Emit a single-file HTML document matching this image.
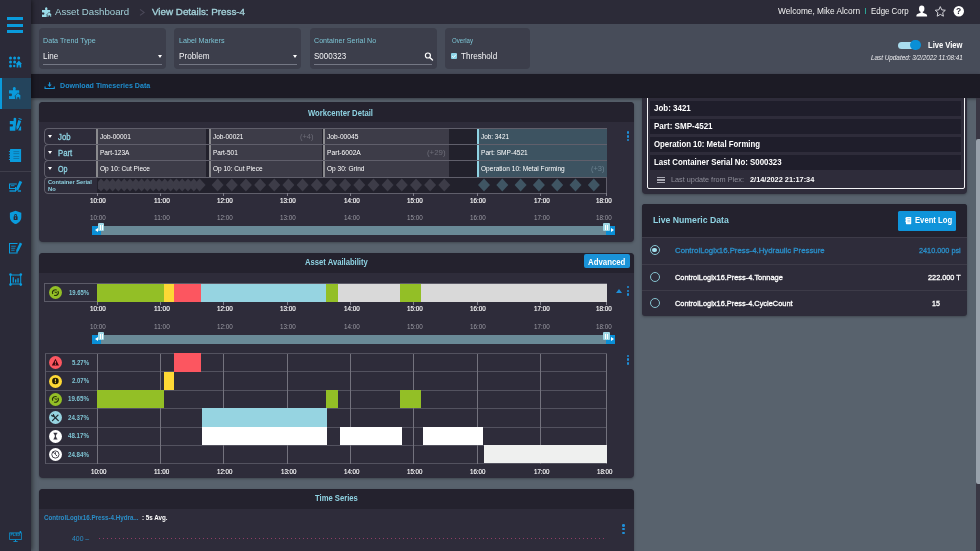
<!DOCTYPE html>
<html><head><meta charset="utf-8"><title>Asset Dashboard</title>
<style>
*{box-sizing:border-box;margin:0;padding:0}
html,body{width:980px;height:551px;overflow:hidden;background:#58626d;font-family:"Liberation Sans",sans-serif;color:#fff}
#root{position:relative;width:980px;height:551px;overflow:hidden;will-change:transform}
#root div,#root span,#root svg{position:absolute}
.t{white-space:nowrap;line-height:1}
.panel{background:#2e2c3a;border-radius:4px;box-shadow:0 1px 2.5px rgba(0,0,0,.28)}
.phead{background:#24222e;border-radius:4px 4px 0 0;left:0;top:0;width:100%;height:20px}
.card{background:#3c3e4b;border-radius:4px;top:27.5px;height:41px}
</style></head><body><div id="root">

<div style="left:0;top:0;width:980px;height:24px;background:#2c2b38"></div>
<div style="left:31px;top:24px;width:949px;height:49.5px;background:#474c59"></div>
<div style="left:31px;top:73.5px;width:949px;height:24.5px;background:#1c1b25;box-shadow:0 1px 3px rgba(0,0,0,.4)"></div>
<div style="left:0;top:0;width:31px;height:551px;background:#2b2a38;box-shadow:1px 0 5px rgba(0,0,0,.55)"></div>
<div style="left:0;top:77.5px;width:30.5px;height:31px;background:#24445c"></div>
<div style="left:0;top:77.5px;width:2px;height:31px;background:#0a9bdc"></div>
<div style="left:0;top:170.5px;width:31px;height:1px;background:#3f3e4b"></div>
<div style="left:6.8px;top:17.3px;width:16.4px;height:3px;background:#0a9bdc"></div>
<div style="left:6.8px;top:23.9px;width:16.4px;height:3px;background:#0a9bdc"></div>
<div style="left:6.8px;top:30.3px;width:16.4px;height:3px;background:#0a9bdc"></div>
<svg style="left:0;top:0" width="31" height="551" viewBox="0 0 31 551" fill="#0a9bdc">
<!-- grid + home -->
<g><circle cx="10.5" cy="58" r="1.5"/><circle cx="14.6" cy="58" r="1.5"/><circle cx="18.7" cy="58" r="1.5"/>
<circle cx="10.5" cy="62" r="1.5"/><circle cx="14.6" cy="62" r="1.5"/><circle cx="10.5" cy="66" r="1.5"/><circle cx="14.2" cy="66" r="1.2"/>
<path d="M18.9 60.6 L22 63.9 L21.2 63.9 L21.2 67.4 L19.6 67.4 L19.6 65.3 L18.3 65.3 L18.3 67.4 L16.6 67.4 L16.6 63.9 L15.8 63.9 Z"/></g>
<!-- puzzle + home (active) -->
<g><path d="M9 90.3 H13 V89.3 A1.5 1.5 0 1 1 15.6 89.3 V90.3 H19.2 V93.2 L15 97 V99 H9 V96 H10.2 A1.3 1.3 0 1 0 10.2 93.6 H9 Z"/>
<path stroke="#24445c" stroke-width="0.6" d="M18 92.8 L21.4 96.2 L20.6 96.2 L20.6 99.2 L19 99.2 L19 97.4 L17.4 97.4 L17.4 99.2 L15.6 99.2 L15.6 96.2 L14.8 96.2 Z"/></g>
<!-- puzzle + pencil -->
<g><path d="M9.8 121 H13.6 V118.7 Q13.6 117.8 14.9 117.8 Q16.2 117.8 16.2 118.7 V121 L15.3 130.8 H9.8 V126.6 H12.2 Q13 126.6 13 125.45 Q13 124.3 12.2 124.3 H9.8 Z"/>
<path d="M18.4 119.9 L21.2 120.9 L18.9 127.6 L16.7 130.2 L16.3 126.8 Z"/><path d="M18.7 118 L21.8 119.1 L21.5 120.1 L18.5 119 Z"/><path d="M20.2 126.4 H21.1 V130.5 H18.2 Z"/></g>
<!-- notebook -->
<g><rect x="10" y="149" width="11.1" height="13" rx="0.6"/>
<rect x="8.9" y="151.1" width="2.4" height="1"/><rect x="8.9" y="153.8" width="2.4" height="1"/><rect x="8.9" y="156.5" width="2.4" height="1"/><rect x="8.9" y="159" width="2.4" height="1"/>
<g fill="#0f74a6"><rect x="13.4" y="151.2" width="5.8" height="0.9"/><rect x="13.4" y="153.2" width="5.8" height="0.9"/><rect x="13.4" y="156" width="5.8" height="0.9"/><rect x="13.4" y="158" width="5.8" height="0.9"/></g></g>
<!-- monitor + pencil -->
<g><path d="M9 183.4 H16.8 V184.5 H10.1 V188 H15.5 V189.1 H9 Z"/><rect x="10.9" y="185.3" width="3.6" height="0.9"/>
<path d="M19.6 180.8 L22.2 182 L18.6 189.4 L16.4 191 L16.2 188.2 Z"/><rect x="9.4" y="190.3" width="6.6" height="1.4"/><rect x="15" y="187" width="1.2" height="4"/><rect x="17.8" y="190.3" width="3.2" height="1.4"/></g>
<!-- shield + lock -->
<g><path d="M15.6 210.8 L21.3 212.7 V217 C21.3 220.6 18.8 223 15.6 224.1 C12.4 223 9.9 220.6 9.9 217 V212.7 Z"/>
<g fill="#2b2a38"><rect x="13.6" y="216.3" width="4" height="3.6" rx="0.4"/><path d="M14.3 216.5 V215.3 A1.3 1.3 0 0 1 16.9 215.3 V216.5 H16.1 V215.3 A0.5 0.5 0 0 0 15.1 215.3 V216.5 Z"/></g><rect x="15.2" y="217.3" width="0.8" height="1.6" fill="#0a9bdc"/></g>
<!-- doc + pencil (outline) -->
<g><path d="M9 243 H17.5 V244 H10 V252.6 H16.6 V249.5 H17.6 V253.6 H9 Z"/>
<rect x="11.2" y="245.8" width="4.6" height="0.8"/><rect x="11.2" y="247.8" width="4" height="0.8"/><rect x="11.2" y="249.8" width="3.4" height="0.8"/>
<path d="M19.8 242.6 L22.2 243.7 L18.6 251 L16.6 252.5 L16.4 250 Z"/></g>
<!-- chart frame -->
<g><path d="M10 274.6 H21.2 V284.6 H10 Z M11 275.6 V283.6 H20.2 V275.6 Z" fill-rule="evenodd"/>
<circle cx="10.5" cy="274.6" r="1.3"/><circle cx="20.8" cy="274.6" r="1.3"/><circle cx="10.5" cy="284.6" r="1.3"/><circle cx="20.8" cy="284.6" r="1.3"/>
<rect x="12.6" y="277.2" width="1.3" height="5.4"/><rect x="15" y="279.4" width="1.3" height="3.2"/><rect x="17.4" y="278.2" width="1.3" height="4.4"/></g>
<!-- plex monitor -->
<g><path d="M9.2 532.6 H21.8 V539.8 H9.2 Z M9.9 533.3 V539.1 H21.1 V533.3 Z" fill-rule="evenodd"/><circle cx="20.4" cy="532" r="0.9"/>
<rect x="15" y="539.8" width="1" height="1.4"/><rect x="13.4" y="541.1" width="4.2" height="0.8"/></g>
</svg>
<div class="t" style="left:10.4px;top:534.3px;font-size:3.6px;color:#0a9bdc;font-weight:bold;letter-spacing:0.2px">PLEX</div>

<div class="t" style="left:54.8px;top:7.3px;font-size:9.5px;color:#a3d1d9;transform-origin:0 0;transform:scaleX(1.018);">Asset Dashboard</div>
<svg style="left:138px;top:7px" width="8" height="11" viewBox="138 7 8 11"><polyline points="140,9.4 144.1,12.4 140,15.4" fill="none" stroke="#4b4959" stroke-width="1.1"/></svg>
<div class="t" style="left:151.9px;top:7.3px;font-size:9.5px;color:#a3d1d9;transform-origin:0 0;transform:scaleX(1.033);-webkit-text-stroke:0.35px #a3d1d9;">View Details: Press-4</div>
<div class="t" style="left:778.0px;top:7.4px;font-size:9px;color:#f2f2f2;transform-origin:0 0;transform:scaleX(0.923);">Welcome, Mike Alcorn</div>
<div style="left:864.6px;top:7.6px;width:1.3px;height:6.6px;background:#2aa595"></div>
<div class="t" style="left:870.6px;top:7.4px;font-size:9px;color:#f2f2f2;transform-origin:0 0;transform:scaleX(0.876);">Edge Corp</div>
<svg style="left:0;top:0" width="980" height="24" viewBox="0 0 980 24">
<ellipse cx="921.7" cy="8.8" rx="2.7" ry="3.2" fill="#fff"/>
<path d="M916.4 16.4 V15.4 Q916.4 14.4 918 13.8 L920.6 12.8 V11.2 H922.8 V12.8 L925.4 13.8 Q927.1 14.4 927.1 15.4 V16.4 Z" fill="#fff"/>
<polygon points="940.30,6.60 941.77,9.88 945.34,10.26 942.68,12.67 943.42,16.19 940.30,14.40 937.18,16.19 937.92,12.67 935.26,10.26 938.83,9.88" fill="none" stroke="#d4d4da" stroke-width="1"/>
<circle cx="958.8" cy="11.3" r="5.2" fill="#fff"/>
</svg>
<div class="t" style="left:956.1px;top:7px;font-size:8.5px;font-weight:bold;color:#2b2a37">?</div>
<svg id="hdrpuzzle" style="left:0;top:0" width="60" height="24" viewBox="0 0 60 24" fill="#9adbe8"><g transform="translate(34.80 -62.28) scale(0.8)">
<path d="M9 90.3 H13 V89.3 A1.5 1.5 0 1 1 15.6 89.3 V90.3 H19.2 V93.2 L15 97 V99 H9 V96 H10.2 A1.3 1.3 0 1 0 10.2 93.6 H9 Z"/>
<path stroke="#2b2a37" stroke-width="0.6" d="M18 92.8 L21.4 96.2 L20.6 96.2 L20.6 99.2 L19 99.2 L19 97.4 L17.4 97.4 L17.4 99.2 L15.6 99.2 L15.6 96.2 L14.8 96.2 Z"/></g></svg>

<div class="card" style="left:39px;width:127px"></div>
<div class="t" style="left:43.3px;top:37.1px;font-size:7.5px;color:#7cc3d3;transform-origin:0 0;transform:scaleX(0.953);">Data Trend Type</div>
<div class="t" style="left:43.3px;top:52.2px;font-size:8.5px;color:#f4f4f6;transform-origin:0 0;transform:scaleX(0.946);">Line</div>
<div style="left:43.3px;top:64px;width:118.5px;height:1px;background:#747784"></div>
<div style="left:158px;top:55.1px;width:0;height:0;border-left:2.5px solid transparent;border-right:2.5px solid transparent;border-top:3.2px solid #fff"></div>
<div class="card" style="left:174.2px;width:127px"></div>
<div class="t" style="left:178.5px;top:37.1px;font-size:7.5px;color:#7cc3d3;transform-origin:0 0;transform:scaleX(0.957);">Label Markers</div>
<div class="t" style="left:178.5px;top:52.2px;font-size:8.5px;color:#f4f4f6;transform-origin:0 0;transform:scaleX(0.964);">Problem</div>
<div style="left:178.5px;top:64px;width:118.5px;height:1px;background:#747784"></div>
<div style="left:293.2px;top:55.1px;width:0;height:0;border-left:2.5px solid transparent;border-right:2.5px solid transparent;border-top:3.2px solid #fff"></div>
<div class="card" style="left:309.6px;width:127px"></div>
<div class="t" style="left:313.9px;top:37.1px;font-size:7.5px;color:#7cc3d3;transform-origin:0 0;transform:scaleX(0.949);">Container Serial No</div>
<div class="t" style="left:313.9px;top:52.2px;font-size:8.5px;color:#f4f4f6;transform-origin:0 0;transform:scaleX(0.943);">S000323</div>
<div style="left:313.90000000000003px;top:64px;width:118.5px;height:1px;background:#747784"></div>
<div class="card" style="left:445px;width:84.5px"></div>
<div class="t" style="left:451.5px;top:37.1px;font-size:7.5px;color:#7cc3d3;transform-origin:0 0;transform:scaleX(0.813);">Overlay</div>
<svg style="left:422px;top:50px" width="14" height="14" viewBox="422 50 14 14"><circle cx="427.9" cy="55.5" r="2.5" fill="none" stroke="#fff" stroke-width="1.2"/><line x1="429.8" y1="57.5" x2="432.5" y2="60" stroke="#fff" stroke-width="1.4" stroke-linecap="round"/></svg>
<div style="left:451.1px;top:53px;width:6px;height:6.4px;background:#8dd3e6;border-radius:1px"></div>
<svg style="left:451.1px;top:53.2px" width="6" height="6" viewBox="0 0 10 10"><path d="M2 5.2 L4.2 7.4 L8.2 2.8" fill="none" stroke="#fff" stroke-width="1.6"/></svg>
<div class="t" style="left:461.0px;top:52.2px;font-size:8.5px;color:#f4f4f6;transform-origin:0 0;transform:scaleX(0.958);">Threshold</div>
<div style="left:898px;top:41.6px;width:21px;height:7.2px;border-radius:3.6px;background:#a9dcee"></div>
<div style="left:910px;top:39.7px;width:10.6px;height:10.6px;border-radius:50%;background:#0a8fd6"></div>
<div class="t" style="left:928.0px;top:40.8px;font-size:8.5px;color:#fff;transform-origin:0 0;transform:scaleX(0.894);font-weight:bold;">Live View</div>
<div class="t" style="left:870.6px;top:54.6px;font-size:6.3px;color:#f0f0f2;transform-origin:0 0;transform:scaleX(1.006);font-style:italic;">Last Updated: 3/2/2022 11:08:41</div>
<div class="t" style="left:59.8px;top:81.9px;font-size:7px;color:#1f8fd0;transform-origin:0 0;transform:scaleX(1.014);font-weight:bold;">Download Timeseries Data</div>
<svg style="left:42px;top:80px" width="16" height="12" viewBox="42 80 16 12" fill="#1797dc"><path d="M44.5 86.6 H45.6 V87.9 H53.7 V86.6 H54.8 V89 H44.5 Z"/><path d="M49 82.3 H50.2 V84.6 H51.6 L49.6 87 L47.6 84.6 H49 Z"/></svg>
<div class="panel" style="left:39px;top:102px;width:595px;height:140px"><div class="phead"></div></div>
<div class="t" style="left:308.0px;top:108.8px;font-size:8.5px;color:#8fd3e3;transform-origin:0 0;transform:scaleX(0.901);font-weight:bold;">Workcenter Detail</div>
<div style="left:44.2px;top:128px;width:53px;height:17.2px;border:1px solid #605f6b;border-right:none;border-radius:4.5px 0 0 4.5px"></div>
<div style="left:48.2px;top:134.6px;width:0;height:0;border-left:2.3px solid transparent;border-right:2.3px solid transparent;border-top:3.4px solid #fff"></div>
<div class="t" style="left:58.4px;top:132.6px;font-size:8.8px;color:#8fd3e3;transform-origin:0 0;transform:scaleX(0.881);-webkit-text-stroke:0.3px #8fd3e3;">Job</div>
<div style="left:97px;top:128px;width:510px;height:17.2px;background:#22212c;border-top:1px solid #605f6b;border-bottom:1px solid #605f6b;border-right:1px solid #605f6b"></div>
<div style="left:44.2px;top:144.2px;width:53px;height:17.2px;border:1px solid #605f6b;border-right:none;border-radius:4.5px 0 0 4.5px"></div>
<div style="left:48.2px;top:150.79999999999998px;width:0;height:0;border-left:2.3px solid transparent;border-right:2.3px solid transparent;border-top:3.4px solid #fff"></div>
<div class="t" style="left:58.4px;top:148.8px;font-size:8.8px;color:#8fd3e3;transform-origin:0 0;transform:scaleX(0.880);-webkit-text-stroke:0.3px #8fd3e3;">Part</div>
<div style="left:97px;top:144.2px;width:510px;height:17.2px;background:#22212c;border-top:1px solid #605f6b;border-bottom:1px solid #605f6b;border-right:1px solid #605f6b"></div>
<div style="left:44.2px;top:160.4px;width:53px;height:17.2px;border:1px solid #605f6b;border-right:none;border-radius:4.5px 0 0 4.5px"></div>
<div style="left:48.2px;top:167.0px;width:0;height:0;border-left:2.3px solid transparent;border-right:2.3px solid transparent;border-top:3.4px solid #fff"></div>
<div class="t" style="left:58.4px;top:165.0px;font-size:8.8px;color:#8fd3e3;transform-origin:0 0;transform:scaleX(0.809);-webkit-text-stroke:0.3px #8fd3e3;">Op</div>
<div style="left:97px;top:160.4px;width:510px;height:17.2px;background:#22212c;border-top:1px solid #605f6b;border-bottom:1px solid #605f6b;border-right:1px solid #605f6b"></div>
<div style="left:44.2px;top:176.6px;width:53px;height:17px;border:1px solid #605f6b;border-right:none;border-radius:4.5px 0 0 4.5px"></div>
<div class="t" style="left:48.1px;top:179.4px;font-size:6px;color:#8fd3e3;transform-origin:0 0;transform:scaleX(0.950);font-weight:bold;">Container Serial</div>
<div class="t" style="left:48.1px;top:186.0px;font-size:6px;color:#8fd3e3;transform-origin:0 0;transform:scaleX(0.963);font-weight:bold;">No</div>
<div style="left:97px;top:176.6px;width:510px;height:17px;background:#22212c;border-top:1px solid #605f6b;border-bottom:1px solid #605f6b;border-right:1px solid #605f6b"></div>
<div style="left:96.4px;top:129px;width:110.1px;height:15.2px;background:#3d3c48;border-left:2px solid #8a8a8e"></div>
<div class="t" style="left:99.8px;top:133.9px;font-size:6.8px;color:#fff;transform-origin:0 0;transform:scaleX(0.958);">Job-00001</div>
<div style="left:96.4px;top:145.2px;width:110.1px;height:15.2px;background:#3d3c48;border-left:2px solid #8a8a8e"></div>
<div class="t" style="left:99.8px;top:150.1px;font-size:6.8px;color:#fff;transform-origin:0 0;transform:scaleX(0.963);">Part-123A</div>
<div style="left:96.4px;top:161.4px;width:110.1px;height:15.2px;background:#3d3c48;border-left:2px solid #8a8a8e"></div>
<div class="t" style="left:99.8px;top:166.3px;font-size:6.8px;color:#fff;transform-origin:0 0;transform:scaleX(0.966);">Op 10: Cut Piece</div>
<div style="left:209.2px;top:129px;width:113.30000000000001px;height:15.2px;background:#3d3c48;border-left:2px solid #8a8a8e"></div>
<div class="t" style="left:212.6px;top:133.9px;font-size:6.8px;color:#fff;transform-origin:0 0;transform:scaleX(0.946);">Job-00021</div>
<div class="t" style="left:300.3px;top:133.9px;font-size:6.8px;color:#6d6d78;transform-origin:0 0;transform:scaleX(1.099);">(+4)</div>
<div style="left:209.2px;top:145.2px;width:113.30000000000001px;height:15.2px;background:#3d3c48;border-left:2px solid #8a8a8e"></div>
<div class="t" style="left:212.6px;top:150.1px;font-size:6.8px;color:#fff;transform-origin:0 0;transform:scaleX(0.951);">Part-501</div>
<div style="left:209.2px;top:161.4px;width:113.30000000000001px;height:15.2px;background:#3d3c48;border-left:2px solid #8a8a8e"></div>
<div class="t" style="left:212.6px;top:166.3px;font-size:6.8px;color:#fff;transform-origin:0 0;transform:scaleX(0.958);">Op 10: Cut Piece</div>
<div style="left:323.2px;top:129px;width:126.30000000000001px;height:15.2px;background:#3d3c48;border-left:2px solid #8a8a8e"></div>
<div class="t" style="left:326.6px;top:133.9px;font-size:6.8px;color:#fff;transform-origin:0 0;transform:scaleX(0.977);">Job-00045</div>
<div style="left:323.2px;top:145.2px;width:126.30000000000001px;height:15.2px;background:#3d3c48;border-left:2px solid #8a8a8e"></div>
<div class="t" style="left:326.6px;top:150.1px;font-size:6.8px;color:#fff;transform-origin:0 0;transform:scaleX(0.983);">Part-6002A</div>
<div class="t" style="left:426.7px;top:150.1px;font-size:6.8px;color:#6d6d78;transform-origin:0 0;transform:scaleX(1.158);">(+29)</div>
<div style="left:323.2px;top:161.4px;width:126.30000000000001px;height:15.2px;background:#3d3c48;border-left:2px solid #8a8a8e"></div>
<div class="t" style="left:326.6px;top:166.3px;font-size:6.8px;color:#fff;transform-origin:0 0;transform:scaleX(0.963);">Op 30: Grind</div>
<div style="left:476.6px;top:129px;width:130px;height:15.2px;background:#3d5361;border-left:2px solid #8fd3e3"></div>
<div class="t" style="left:480.6px;top:133.9px;font-size:6.8px;color:#fff;transform-origin:0 0;transform:scaleX(0.937);">Job: 3421</div>
<div style="left:476.6px;top:145.2px;width:130px;height:15.2px;background:#3d5361;border-left:2px solid #8fd3e3"></div>
<div class="t" style="left:480.6px;top:150.1px;font-size:6.8px;color:#fff;transform-origin:0 0;transform:scaleX(0.967);">Part: SMP-4521</div>
<div style="left:476.6px;top:161.4px;width:130px;height:15.2px;background:#3d5361;border-left:2px solid #8fd3e3"></div>
<div class="t" style="left:480.6px;top:166.3px;font-size:6.8px;color:#fff;transform-origin:0 0;transform:scaleX(0.968);">Operation 10: Metal Forming</div>
<div class="t" style="left:591.0px;top:166.3px;font-size:6.8px;color:#6b8290;transform-origin:0 0;transform:scaleX(1.099);">(+3)</div>
<svg style="left:98px;top:170px" width="520" height="30" viewBox="98 170 520 30"><polygon points="95.0,185 101.0,178.5 107.0,185 101.0,191.5" fill="#3d3c48"/><polygon points="100.8,185 106.8,178.5 112.8,185 106.8,191.5" fill="#3d3c48"/><polygon points="106.6,185 112.6,178.5 118.6,185 112.6,191.5" fill="#3d3c48"/><polygon points="112.4,185 118.4,178.5 124.4,185 118.4,191.5" fill="#3d3c48"/><polygon points="118.2,185 124.2,178.5 130.2,185 124.2,191.5" fill="#3d3c48"/><polygon points="124.0,185 130.0,178.5 136.0,185 130.0,191.5" fill="#3d3c48"/><polygon points="129.8,185 135.8,178.5 141.8,185 135.8,191.5" fill="#3d3c48"/><polygon points="135.6,185 141.6,178.5 147.6,185 141.6,191.5" fill="#3d3c48"/><polygon points="141.4,185 147.4,178.5 153.4,185 147.4,191.5" fill="#3d3c48"/><polygon points="147.2,185 153.2,178.5 159.2,185 153.2,191.5" fill="#3d3c48"/><polygon points="153.0,185 159.0,178.5 165.0,185 159.0,191.5" fill="#3d3c48"/><polygon points="158.8,185 164.8,178.5 170.8,185 164.8,191.5" fill="#3d3c48"/><polygon points="164.6,185 170.6,178.5 176.6,185 170.6,191.5" fill="#3d3c48"/><polygon points="170.4,185 176.4,178.5 182.4,185 176.4,191.5" fill="#3d3c48"/><polygon points="176.2,185 182.2,178.5 188.2,185 182.2,191.5" fill="#3d3c48"/><polygon points="182.0,185 188.0,178.5 194.0,185 188.0,191.5" fill="#3d3c48"/><polygon points="187.8,185 193.8,178.5 199.8,185 193.8,191.5" fill="#3d3c48"/><polygon points="193.6,185 199.6,178.5 205.6,185 199.6,191.5" fill="#3d3c48"/><polygon points="211.6,185 217.6,178.5 223.6,185 217.6,191.5" fill="#3d3c48"/><polygon points="225.8,185 231.8,178.5 237.8,185 231.8,191.5" fill="#3d3c48"/><polygon points="239.9,185 245.9,178.5 251.9,185 245.9,191.5" fill="#3d3c48"/><polygon points="254.1,185 260.1,178.5 266.1,185 260.1,191.5" fill="#3d3c48"/><polygon points="268.3,185 274.3,178.5 280.3,185 274.3,191.5" fill="#3d3c48"/><polygon points="282.4,185 288.4,178.5 294.4,185 288.4,191.5" fill="#3d3c48"/><polygon points="296.6,185 302.6,178.5 308.6,185 302.6,191.5" fill="#3d3c48"/><polygon points="310.8,185 316.8,178.5 322.8,185 316.8,191.5" fill="#3d3c48"/><polygon points="325.0,185 331.0,178.5 337.0,185 331.0,191.5" fill="#3d3c48"/><polygon points="339.1,185 345.1,178.5 351.1,185 345.1,191.5" fill="#3d3c48"/><polygon points="353.3,185 359.3,178.5 365.3,185 359.3,191.5" fill="#3d3c48"/><polygon points="367.5,185 373.5,178.5 379.5,185 373.5,191.5" fill="#3d3c48"/><polygon points="381.6,185 387.6,178.5 393.6,185 387.6,191.5" fill="#3d3c48"/><polygon points="395.8,185 401.8,178.5 407.8,185 401.8,191.5" fill="#3d3c48"/><polygon points="410.0,185 416.0,178.5 422.0,185 416.0,191.5" fill="#3d3c48"/><polygon points="424.1,185 430.1,178.5 436.1,185 430.1,191.5" fill="#3d3c48"/><polygon points="438.3,185 444.3,178.5 450.3,185 444.3,191.5" fill="#3d3c48"/><polygon points="478.0,185 484.0,178.5 490.0,185 484.0,191.5" fill="#3f5563"/><polygon points="496.3,185 502.3,178.5 508.3,185 502.3,191.5" fill="#3f5563"/><polygon points="514.6,185 520.6,178.5 526.6,185 520.6,191.5" fill="#3f5563"/><polygon points="532.9,185 538.9,178.5 544.9,185 538.9,191.5" fill="#3f5563"/><polygon points="551.2,185 557.2,178.5 563.2,185 557.2,191.5" fill="#3f5563"/><polygon points="569.5,185 575.5,178.5 581.5,185 575.5,191.5" fill="#3f5563"/><polygon points="587.8,185 593.8,178.5 599.8,185 593.8,191.5" fill="#3f5563"/></svg>
<div style="left:96.8px;top:193.3px;width:1px;height:3.1999999999999886px;background:#7f7e8a"></div>
<div class="t" style="left:90.4px;top:196.9px;font-size:7.2px;color:#fff;transform-origin:0 0;transform:scaleX(0.877);-webkit-text-stroke:0.15px #fff;">10:00</div>
<div class="t" style="left:90.4px;top:213.9px;font-size:7.2px;color:#9a9aa3;transform-origin:0 0;transform:scaleX(0.877);">10:00</div>
<div style="left:160.1px;top:193.3px;width:1px;height:3.1999999999999886px;background:#7f7e8a"></div>
<div class="t" style="left:153.7px;top:196.9px;font-size:7.2px;color:#fff;transform-origin:0 0;transform:scaleX(0.904);-webkit-text-stroke:0.15px #fff;">11:00</div>
<div class="t" style="left:153.7px;top:213.9px;font-size:7.2px;color:#9a9aa3;transform-origin:0 0;transform:scaleX(0.904);">11:00</div>
<div style="left:223.4px;top:193.3px;width:1px;height:3.1999999999999886px;background:#7f7e8a"></div>
<div class="t" style="left:217.0px;top:196.9px;font-size:7.2px;color:#fff;transform-origin:0 0;transform:scaleX(0.877);-webkit-text-stroke:0.15px #fff;">12:00</div>
<div class="t" style="left:217.0px;top:213.9px;font-size:7.2px;color:#9a9aa3;transform-origin:0 0;transform:scaleX(0.877);">12:00</div>
<div style="left:286.7px;top:193.3px;width:1px;height:3.1999999999999886px;background:#7f7e8a"></div>
<div class="t" style="left:280.3px;top:196.9px;font-size:7.2px;color:#fff;transform-origin:0 0;transform:scaleX(0.877);-webkit-text-stroke:0.15px #fff;">13:00</div>
<div class="t" style="left:280.3px;top:213.9px;font-size:7.2px;color:#9a9aa3;transform-origin:0 0;transform:scaleX(0.877);">13:00</div>
<div style="left:350.0px;top:193.3px;width:1px;height:3.1999999999999886px;background:#7f7e8a"></div>
<div class="t" style="left:343.6px;top:196.9px;font-size:7.2px;color:#fff;transform-origin:0 0;transform:scaleX(0.877);-webkit-text-stroke:0.15px #fff;">14:00</div>
<div class="t" style="left:343.6px;top:213.9px;font-size:7.2px;color:#9a9aa3;transform-origin:0 0;transform:scaleX(0.877);">14:00</div>
<div style="left:413.3px;top:193.3px;width:1px;height:3.1999999999999886px;background:#7f7e8a"></div>
<div class="t" style="left:406.9px;top:196.9px;font-size:7.2px;color:#fff;transform-origin:0 0;transform:scaleX(0.877);-webkit-text-stroke:0.15px #fff;">15:00</div>
<div class="t" style="left:406.9px;top:213.9px;font-size:7.2px;color:#9a9aa3;transform-origin:0 0;transform:scaleX(0.877);">15:00</div>
<div style="left:476.6px;top:193.3px;width:1px;height:3.1999999999999886px;background:#7f7e8a"></div>
<div class="t" style="left:470.2px;top:196.9px;font-size:7.2px;color:#fff;transform-origin:0 0;transform:scaleX(0.877);-webkit-text-stroke:0.15px #fff;">16:00</div>
<div class="t" style="left:470.2px;top:213.9px;font-size:7.2px;color:#9a9aa3;transform-origin:0 0;transform:scaleX(0.877);">16:00</div>
<div style="left:539.9px;top:193.3px;width:1px;height:3.1999999999999886px;background:#7f7e8a"></div>
<div class="t" style="left:533.5px;top:196.9px;font-size:7.2px;color:#fff;transform-origin:0 0;transform:scaleX(0.877);-webkit-text-stroke:0.15px #fff;">17:00</div>
<div class="t" style="left:533.5px;top:213.9px;font-size:7.2px;color:#9a9aa3;transform-origin:0 0;transform:scaleX(0.877);">17:00</div>
<div style="left:606.0px;top:193.3px;width:1px;height:3.1999999999999886px;background:#7f7e8a"></div>
<div class="t" style="left:596.4px;top:196.9px;font-size:7.2px;color:#fff;transform-origin:0 0;transform:scaleX(0.877);-webkit-text-stroke:0.15px #fff;">18:00</div>
<div class="t" style="left:596.4px;top:213.9px;font-size:7.2px;color:#9a9aa3;transform-origin:0 0;transform:scaleX(0.877);">18:00</div>
<div style="left:92px;top:225.5px;width:523px;height:9px;background:#6a8a97"></div>
<div style="left:92px;top:225.5px;width:9px;height:9px;background:#0a8fd6"></div>
<div style="left:606px;top:225.5px;width:9px;height:9px;background:#0a8fd6"></div>
<div style="left:95px;top:227.5px;width:0;height:0;border-top:2.5px solid transparent;border-bottom:2.5px solid transparent;border-right:3.5px solid #fff"></div>
<div style="left:610.5px;top:227.5px;width:0;height:0;border-top:2.5px solid transparent;border-bottom:2.5px solid transparent;border-left:3.5px solid #fff"></div>
<div style="left:97.5px;top:223.0px;width:6.5px;height:8px;background:#9fd8e6;border-radius:1px"></div>
<div style="left:99.5px;top:224.5px;width:1px;height:5px;background:#fff"></div>
<div style="left:101.5px;top:224.5px;width:1px;height:5px;background:#fff"></div>
<div style="left:603px;top:223.0px;width:6.5px;height:8px;background:#9fd8e6;border-radius:1px"></div>
<div style="left:605px;top:224.5px;width:1px;height:5px;background:#fff"></div>
<div style="left:607px;top:224.5px;width:1px;height:5px;background:#fff"></div>
<div style="left:626.8px;top:131.4px;width:2.5px;height:2.5px;border-radius:50%;background:#1f8fd8"></div>
<div style="left:626.8px;top:135.1px;width:2.5px;height:2.5px;border-radius:50%;background:#1f8fd8"></div>
<div style="left:626.8px;top:138.7px;width:2.5px;height:2.5px;border-radius:50%;background:#1f8fd8"></div>
<div class="panel" style="left:39px;top:252.5px;width:595px;height:225.5px"><div class="phead"></div></div>
<div class="t" style="left:304.7px;top:258.3px;font-size:8.5px;color:#8fd3e3;transform-origin:0 0;transform:scaleX(0.900);font-weight:bold;">Asset Availability</div>
<div style="left:583.6px;top:254px;width:46.2px;height:14.2px;background:#1a93d8;border-radius:2px"></div>
<div class="t" style="left:588.0px;top:257.8px;font-size:8.3px;color:#fff;transform-origin:0 0;transform:scaleX(0.943);font-weight:bold;">Advanced</div>
<div style="left:44.2px;top:283.2px;width:563px;height:19px;border:1px solid #5c5b68"></div>
<div style="left:96.7px;top:283.7px;width:67.2px;height:18.1px;background:#93bf26"></div>
<div style="left:163.9px;top:283.7px;width:10.3px;height:18.1px;background:#fdd835"></div>
<div style="left:174.2px;top:283.7px;width:26.8px;height:18.1px;background:#fc5660"></div>
<div style="left:201px;top:283.7px;width:125.0px;height:18.1px;background:#96d4e1"></div>
<div style="left:326px;top:283.7px;width:12.3px;height:18.1px;background:#93bf26"></div>
<div style="left:338.3px;top:283.7px;width:62.0px;height:18.1px;background:#d9d9d9"></div>
<div style="left:400.3px;top:283.7px;width:20.5px;height:18.1px;background:#93bf26"></div>
<div style="left:420.8px;top:283.7px;width:185.9px;height:18.1px;background:#d9d9d9"></div>
<div style="left:48.9px;top:286.1px;width:13px;height:13px;border-radius:50%;background:#93bf26"></div>
<div class="t" style="left:68.8px;top:290.0px;font-size:6.4px;color:#7fc4d4;transform-origin:0 0;transform:scaleX(0.926);font-weight:bold;">19.65%</div>
<div style="left:96.8px;top:301.7px;width:1px;height:3.3000000000000114px;background:#7f7e8a"></div>
<div class="t" style="left:90.4px;top:305.3px;font-size:7.2px;color:#fff;transform-origin:0 0;transform:scaleX(0.877);-webkit-text-stroke:0.15px #fff;">10:00</div>
<div class="t" style="left:90.4px;top:323.0px;font-size:7.2px;color:#9a9aa3;transform-origin:0 0;transform:scaleX(0.877);">10:00</div>
<div style="left:160.1px;top:301.7px;width:1px;height:3.3000000000000114px;background:#7f7e8a"></div>
<div class="t" style="left:153.7px;top:305.3px;font-size:7.2px;color:#fff;transform-origin:0 0;transform:scaleX(0.904);-webkit-text-stroke:0.15px #fff;">11:00</div>
<div class="t" style="left:153.7px;top:323.0px;font-size:7.2px;color:#9a9aa3;transform-origin:0 0;transform:scaleX(0.904);">11:00</div>
<div style="left:223.4px;top:301.7px;width:1px;height:3.3000000000000114px;background:#7f7e8a"></div>
<div class="t" style="left:217.0px;top:305.3px;font-size:7.2px;color:#fff;transform-origin:0 0;transform:scaleX(0.877);-webkit-text-stroke:0.15px #fff;">12:00</div>
<div class="t" style="left:217.0px;top:323.0px;font-size:7.2px;color:#9a9aa3;transform-origin:0 0;transform:scaleX(0.877);">12:00</div>
<div style="left:286.7px;top:301.7px;width:1px;height:3.3000000000000114px;background:#7f7e8a"></div>
<div class="t" style="left:280.3px;top:305.3px;font-size:7.2px;color:#fff;transform-origin:0 0;transform:scaleX(0.877);-webkit-text-stroke:0.15px #fff;">13:00</div>
<div class="t" style="left:280.3px;top:323.0px;font-size:7.2px;color:#9a9aa3;transform-origin:0 0;transform:scaleX(0.877);">13:00</div>
<div style="left:350.0px;top:301.7px;width:1px;height:3.3000000000000114px;background:#7f7e8a"></div>
<div class="t" style="left:343.6px;top:305.3px;font-size:7.2px;color:#fff;transform-origin:0 0;transform:scaleX(0.877);-webkit-text-stroke:0.15px #fff;">14:00</div>
<div class="t" style="left:343.6px;top:323.0px;font-size:7.2px;color:#9a9aa3;transform-origin:0 0;transform:scaleX(0.877);">14:00</div>
<div style="left:413.3px;top:301.7px;width:1px;height:3.3000000000000114px;background:#7f7e8a"></div>
<div class="t" style="left:406.9px;top:305.3px;font-size:7.2px;color:#fff;transform-origin:0 0;transform:scaleX(0.877);-webkit-text-stroke:0.15px #fff;">15:00</div>
<div class="t" style="left:406.9px;top:323.0px;font-size:7.2px;color:#9a9aa3;transform-origin:0 0;transform:scaleX(0.877);">15:00</div>
<div style="left:476.6px;top:301.7px;width:1px;height:3.3000000000000114px;background:#7f7e8a"></div>
<div class="t" style="left:470.2px;top:305.3px;font-size:7.2px;color:#fff;transform-origin:0 0;transform:scaleX(0.877);-webkit-text-stroke:0.15px #fff;">16:00</div>
<div class="t" style="left:470.2px;top:323.0px;font-size:7.2px;color:#9a9aa3;transform-origin:0 0;transform:scaleX(0.877);">16:00</div>
<div style="left:539.9px;top:301.7px;width:1px;height:3.3000000000000114px;background:#7f7e8a"></div>
<div class="t" style="left:533.5px;top:305.3px;font-size:7.2px;color:#fff;transform-origin:0 0;transform:scaleX(0.877);-webkit-text-stroke:0.15px #fff;">17:00</div>
<div class="t" style="left:533.5px;top:323.0px;font-size:7.2px;color:#9a9aa3;transform-origin:0 0;transform:scaleX(0.877);">17:00</div>
<div style="left:606.0px;top:301.7px;width:1px;height:3.3000000000000114px;background:#7f7e8a"></div>
<div class="t" style="left:596.4px;top:305.3px;font-size:7.2px;color:#fff;transform-origin:0 0;transform:scaleX(0.877);-webkit-text-stroke:0.15px #fff;">18:00</div>
<div class="t" style="left:596.4px;top:323.0px;font-size:7.2px;color:#9a9aa3;transform-origin:0 0;transform:scaleX(0.877);">18:00</div>
<div style="left:92px;top:334.5px;width:523px;height:9px;background:#6a8a97"></div>
<div style="left:92px;top:334.5px;width:9px;height:9px;background:#0a8fd6"></div>
<div style="left:606px;top:334.5px;width:9px;height:9px;background:#0a8fd6"></div>
<div style="left:95px;top:336.5px;width:0;height:0;border-top:2.5px solid transparent;border-bottom:2.5px solid transparent;border-right:3.5px solid #fff"></div>
<div style="left:610.5px;top:336.5px;width:0;height:0;border-top:2.5px solid transparent;border-bottom:2.5px solid transparent;border-left:3.5px solid #fff"></div>
<div style="left:97.5px;top:332.0px;width:6.5px;height:8px;background:#9fd8e6;border-radius:1px"></div>
<div style="left:99.5px;top:333.5px;width:1px;height:5px;background:#fff"></div>
<div style="left:101.5px;top:333.5px;width:1px;height:5px;background:#fff"></div>
<div style="left:603px;top:332.0px;width:6.5px;height:8px;background:#9fd8e6;border-radius:1px"></div>
<div style="left:605px;top:333.5px;width:1px;height:5px;background:#fff"></div>
<div style="left:607px;top:333.5px;width:1px;height:5px;background:#fff"></div>
<div style="left:626.8px;top:285.9px;width:2.5px;height:2.5px;border-radius:50%;background:#1f8fd8"></div>
<div style="left:626.8px;top:289.5px;width:2.5px;height:2.5px;border-radius:50%;background:#1f8fd8"></div>
<div style="left:626.8px;top:293.2px;width:2.5px;height:2.5px;border-radius:50%;background:#1f8fd8"></div>
<div style="left:615.8px;top:288.8px;width:0;height:0;border-left:3px solid transparent;border-right:3px solid transparent;border-bottom:4.5px solid #1f8fd8"></div>
<div style="left:626.8px;top:354.7px;width:2.5px;height:2.5px;border-radius:50%;background:#1f8fd8"></div>
<div style="left:626.8px;top:358.3px;width:2.5px;height:2.5px;border-radius:50%;background:#1f8fd8"></div>
<div style="left:626.8px;top:362.0px;width:2.5px;height:2.5px;border-radius:50%;background:#1f8fd8"></div>
<div style="left:44.5px;top:353.0px;width:562.5px;height:1px;background:#53525f"></div>
<div style="left:44.5px;top:371.4px;width:562.5px;height:1px;background:#53525f"></div>
<div style="left:44.5px;top:389.8px;width:562.5px;height:1px;background:#53525f"></div>
<div style="left:44.5px;top:408.1px;width:562.5px;height:1px;background:#53525f"></div>
<div style="left:44.5px;top:426.5px;width:562.5px;height:1px;background:#53525f"></div>
<div style="left:44.5px;top:444.9px;width:562.5px;height:1px;background:#53525f"></div>
<div style="left:44.5px;top:463.3px;width:562.5px;height:1px;background:#53525f"></div>
<div style="left:44.5px;top:353.5px;width:1px;height:110.3px;background:#5a5966"></div>
<div style="left:96.8px;top:353.5px;width:1px;height:110.3px;background:#73727d"></div>
<div class="t" style="left:90.6px;top:467.9px;font-size:7.2px;color:#fff;transform-origin:0 0;transform:scaleX(0.855);-webkit-text-stroke:0.15px #fff;">10:00</div>
<div style="left:160.1px;top:353.5px;width:1px;height:110.3px;background:#73727d"></div>
<div class="t" style="left:153.9px;top:467.9px;font-size:7.2px;color:#fff;transform-origin:0 0;transform:scaleX(0.881);-webkit-text-stroke:0.15px #fff;">11:00</div>
<div style="left:223.4px;top:353.5px;width:1px;height:110.3px;background:#73727d"></div>
<div class="t" style="left:217.2px;top:467.9px;font-size:7.2px;color:#fff;transform-origin:0 0;transform:scaleX(0.855);-webkit-text-stroke:0.15px #fff;">12:00</div>
<div style="left:286.7px;top:353.5px;width:1px;height:110.3px;background:#73727d"></div>
<div class="t" style="left:280.5px;top:467.9px;font-size:7.2px;color:#fff;transform-origin:0 0;transform:scaleX(0.855);-webkit-text-stroke:0.15px #fff;">13:00</div>
<div style="left:350.0px;top:353.5px;width:1px;height:110.3px;background:#73727d"></div>
<div class="t" style="left:343.8px;top:467.9px;font-size:7.2px;color:#fff;transform-origin:0 0;transform:scaleX(0.855);-webkit-text-stroke:0.15px #fff;">14:00</div>
<div style="left:413.3px;top:353.5px;width:1px;height:110.3px;background:#73727d"></div>
<div class="t" style="left:407.1px;top:467.9px;font-size:7.2px;color:#fff;transform-origin:0 0;transform:scaleX(0.855);-webkit-text-stroke:0.15px #fff;">15:00</div>
<div style="left:476.6px;top:353.5px;width:1px;height:110.3px;background:#73727d"></div>
<div class="t" style="left:470.4px;top:467.9px;font-size:7.2px;color:#fff;transform-origin:0 0;transform:scaleX(0.855);-webkit-text-stroke:0.15px #fff;">16:00</div>
<div style="left:539.9px;top:353.5px;width:1px;height:110.3px;background:#73727d"></div>
<div class="t" style="left:533.7px;top:467.9px;font-size:7.2px;color:#fff;transform-origin:0 0;transform:scaleX(0.855);-webkit-text-stroke:0.15px #fff;">17:00</div>
<div style="left:606.0px;top:353.5px;width:1px;height:110.3px;background:#73727d"></div>
<div class="t" style="left:596.6px;top:467.9px;font-size:7.2px;color:#fff;transform-origin:0 0;transform:scaleX(0.855);-webkit-text-stroke:0.15px #fff;">18:00</div>
<div style="left:174.2px;top:353.2px;width:26.8px;height:18.4px;background:#fc5660"></div>
<div style="left:163.9px;top:371.6px;width:10.3px;height:18.4px;background:#fdd835"></div>
<div style="left:96.7px;top:390.0px;width:67.2px;height:18.4px;background:#93bf26"></div>
<div style="left:326px;top:390.0px;width:12.3px;height:18.4px;background:#93bf26"></div>
<div style="left:400.3px;top:390.0px;width:20.5px;height:18.4px;background:#93bf26"></div>
<div style="left:202px;top:408.3px;width:124.8px;height:18.4px;background:#96d4e1"></div>
<div style="left:202px;top:426.7px;width:124.8px;height:18.4px;background:#ffffff"></div>
<div style="left:340px;top:426.7px;width:62.0px;height:18.4px;background:#ffffff"></div>
<div style="left:423px;top:426.7px;width:59.7px;height:18.4px;background:#ffffff"></div>
<div style="left:483.5px;top:445.1px;width:123.0px;height:18.4px;background:#eff0ef"></div>
<div style="left:48.9px;top:356.1px;width:13px;height:13px;border-radius:50%;background:#fc5660"></div>
<div class="t" style="left:71.8px;top:359.7px;font-size:6.4px;color:#7fc4d4;transform-origin:0 0;transform:scaleX(0.942);font-weight:bold;">5.27%</div>
<div style="left:48.9px;top:374.5px;width:13px;height:13px;border-radius:50%;background:#fdd835"></div>
<div class="t" style="left:71.8px;top:378.0px;font-size:6.4px;color:#7fc4d4;transform-origin:0 0;transform:scaleX(0.942);font-weight:bold;">2.07%</div>
<div style="left:48.9px;top:392.9px;width:13px;height:13px;border-radius:50%;background:#93bf26"></div>
<div class="t" style="left:67.9px;top:396.4px;font-size:6.4px;color:#7fc4d4;transform-origin:0 0;transform:scaleX(0.967);font-weight:bold;">19.65%</div>
<div style="left:48.9px;top:411.2px;width:13px;height:13px;border-radius:50%;background:#96d4e1"></div>
<div class="t" style="left:67.9px;top:414.8px;font-size:6.4px;color:#7fc4d4;transform-origin:0 0;transform:scaleX(0.967);font-weight:bold;">24.37%</div>
<div style="left:48.9px;top:429.6px;width:13px;height:13px;border-radius:50%;background:#ffffff"></div>
<div class="t" style="left:67.9px;top:433.2px;font-size:6.4px;color:#7fc4d4;transform-origin:0 0;transform:scaleX(0.967);font-weight:bold;">48.17%</div>
<div style="left:48.9px;top:448.0px;width:13px;height:13px;border-radius:50%;background:#ffffff"></div>
<div class="t" style="left:67.9px;top:451.6px;font-size:6.4px;color:#7fc4d4;transform-origin:0 0;transform:scaleX(0.967);font-weight:bold;">24.84%</div>
<svg style="left:0;top:0" width="110" height="551" viewBox="0 0 110 551"><path d="M55.4 358.70000000000005 L59.0 365.5 H51.8 Z" fill="#3a0a10"/><rect x="54.949999999999996" y="360.90000000000003" width="0.9" height="2.6" fill="#fc5660"/><rect x="54.949999999999996" y="364.00" width="0.9" height="0.9" fill="#fc5660"/><circle cx="55.4" cy="380.98" r="3.3" fill="#221d05"/><rect x="54.9" y="378.88" width="1" height="2.6" fill="#fdd835"/><rect x="54.9" y="382.08" width="1" height="1" fill="#fdd835"/><circle cx="55.4" cy="399.36" r="2.9" fill="none" stroke="#26300a" stroke-width="1" stroke-dasharray="7.4 1.7" transform="rotate(-35 55.4 399.36)"/><path d="M53.8 398.46000000000004 H56.699999999999996 V400.36 Z" fill="#26300a"/><circle cx="55.4" cy="292.6" r="2.9" fill="none" stroke="#26300a" stroke-width="1" stroke-dasharray="7.4 1.7" transform="rotate(-35 55.4 292.6)"/><path d="M53.8 291.70000000000005 H56.699999999999996 V293.6 Z" fill="#26300a"/><g stroke="#1f2a30" stroke-width="1.3" stroke-linecap="round"><line x1="52.6" y1="414.94" x2="58.3" y2="420.64"/><line x1="58.0" y1="415.14" x2="52.5" y2="420.64"/></g><circle cx="52.8" cy="415.14" r="1.5" fill="#1f2a30"/><circle cx="52.199999999999996" cy="414.54" r="0.8" fill="#96d4e1"/><path d="M53.4 432.82 H57.4 V433.52 H56.9 L55.8 436.12 L56.9 438.72 H57.4 V439.42 H53.4 V438.72 H53.9 L55.0 436.12 L53.9 433.52 H53.4 Z" fill="#33323c"/><circle cx="55.4" cy="454.5" r="3.6" fill="none" stroke="#33323c" stroke-width="0.9"/><path d="M55.4 452.10 V454.50 L57.1 456.00" fill="none" stroke="#33323c" stroke-width="0.9"/><path d="M53.0 451.90 L54.8 453.90" stroke="#33323c" stroke-width="0.8"/></svg>
<div class="panel" style="left:39px;top:489px;width:595px;height:80px"><div class="phead"></div></div>
<div class="t" style="left:314.7px;top:494.1px;font-size:8.5px;color:#8fd3e3;transform-origin:0 0;transform:scaleX(0.900);font-weight:bold;">Time Series</div>
<div class="t" style="left:44.0px;top:515.2px;font-size:6.8px;color:#2b8fc9;transform-origin:0 0;transform:scaleX(0.917);font-weight:bold;">ControlLogix16.Press-4.Hydra...</div>
<div class="t" style="left:141.7px;top:515.2px;font-size:6.8px;color:#fff;transform-origin:0 0;transform:scaleX(0.920);font-weight:bold;">: 5s Avg.</div>
<div class="t" style="left:71.6px;top:535.1px;font-size:7.5px;color:#2b8fc9;transform-origin:0 0;transform:scaleX(0.916);">400 –</div>
<div style="left:99px;top:538.3px;width:507.5px;height:1.1px;background:repeating-linear-gradient(90deg,#8f3c66 0,#8f3c66 1.5px,transparent 1.5px,transparent 4px)"></div>
<div style="left:622px;top:524.2px;width:2.5px;height:2.5px;border-radius:50%;background:#1f8fd8"></div>
<div style="left:622px;top:527.9px;width:2.5px;height:2.5px;border-radius:50%;background:#1f8fd8"></div>
<div style="left:622px;top:531.5px;width:2.5px;height:2.5px;border-radius:50%;background:#1f8fd8"></div>
<div class="panel" style="left:642px;top:98px;width:325px;height:95.7px;border-radius:0 0 4px 4px"></div>
<div class="panel" style="left:642px;top:204px;width:325px;height:112px;border-radius:3px"></div>
<div style="left:642px;top:98px;width:325px;height:96px;overflow:hidden"><div style="left:4.5px;top:-8px;width:318px;height:99px;border:1.3px solid #f4f4f6;border-radius:2px"></div></div>
<div style="left:650px;top:100.6px;width:311px;height:15px;background:#1f1e2b"></div>
<div class="t" style="left:653.9px;top:103.9px;font-size:8.3px;color:#fff;transform-origin:0 0;transform:scaleX(0.961);font-weight:bold;">Job: 3421</div>
<div style="left:650px;top:118.8px;width:311px;height:15px;background:#1f1e2b"></div>
<div class="t" style="left:653.9px;top:122.1px;font-size:8.3px;color:#fff;transform-origin:0 0;transform:scaleX(0.970);font-weight:bold;">Part: SMP-4521</div>
<div style="left:650px;top:136.9px;width:311px;height:15px;background:#1f1e2b"></div>
<div class="t" style="left:653.9px;top:140.2px;font-size:8.3px;color:#fff;transform-origin:0 0;transform:scaleX(0.943);font-weight:bold;">Operation 10: Metal Forming</div>
<div style="left:650px;top:155.1px;width:311px;height:15px;background:#1f1e2b"></div>
<div class="t" style="left:653.9px;top:158.4px;font-size:8.3px;color:#fff;transform-origin:0 0;transform:scaleX(0.947);font-weight:bold;">Last Container Serial No: S000323</div>
<div class="t" style="left:671.4px;top:176.4px;font-size:7px;color:#8e8e99;transform-origin:0 0;transform:scaleX(1.041);">Last update from Plex:</div>
<div class="t" style="left:749.6px;top:176.4px;font-size:7px;color:#fff;transform-origin:0 0;transform:scaleX(1.052);font-weight:bold;">2/14/2022 21:17:34</div>
<div style="left:657px;top:177.20px;width:8px;height:0.9px;background:#a9a9b3"></div>
<div style="left:657px;top:178.75px;width:8px;height:0.9px;background:#a9a9b3"></div>
<div style="left:657px;top:180.30px;width:8px;height:0.9px;background:#a9a9b3"></div>
<div style="left:657px;top:181.85px;width:8px;height:0.9px;background:#a9a9b3"></div>
<div style="left:642px;top:204px;width:325px;height:33.2px;background:#24222e;border-radius:3px 3px 0 0"></div>
<div class="t" style="left:653.2px;top:216.3px;font-size:9.3px;color:#8fd3e3;transform-origin:0 0;transform:scaleX(0.934);font-weight:bold;">Live Numeric Data</div>
<div style="left:898.3px;top:211px;width:58px;height:20px;background:#0f94da;border-radius:1.5px"></div>
<div class="t" style="left:914.9px;top:216.4px;font-size:8.3px;color:#fff;transform-origin:0 0;transform:scaleX(0.925);font-weight:bold;">Event Log</div>
<svg style="left:904px;top:215px" width="10" height="12" viewBox="904 215 10 12"><rect x="905.9" y="216.9" width="5.3" height="7.3" rx="0.6" fill="#fff"/><g fill="#fff"><rect x="905.2" y="217.9" width="1.2" height="0.8"/><rect x="905.2" y="219.6" width="1.2" height="0.8"/><rect x="905.2" y="221.3" width="1.2" height="0.8"/></g><g fill="#7cc4ea"><rect x="907.4" y="218.3" width="2.8" height="0.7"/><rect x="907.4" y="219.9" width="2.8" height="0.7"/><rect x="907.4" y="221.5" width="2.8" height="0.7"/></g></svg>
<div style="left:642px;top:237.2px;width:325px;height:1px;background:#3d3b48"></div>
<div style="left:649.6px;top:245.0px;width:10px;height:10px;border-radius:50%;border:1px solid #86c3cf"></div>
<div style="left:652.2px;top:247.6px;width:4.8px;height:4.8px;border-radius:50%;background:#a3e1ee"></div>
<div class="t" style="left:675.4px;top:246.8px;font-size:7.5px;color:#2b8fc9;transform-origin:0 0;transform:scaleX(1.040);-webkit-text-stroke:0.3px #2b8fc9;">ControlLogix16.Press-4.Hydraulic Pressure</div>
<div class="t" style="left:919.3px;top:246.8px;font-size:7.5px;color:#2b8fc9;transform-origin:0 0;transform:scaleX(0.971);-webkit-text-stroke:0.3px #2b8fc9;">2410.000 psi</div>
<div style="left:642px;top:263.5px;width:325px;height:1px;background:#3d3b48"></div>
<div style="left:649.6px;top:271.7px;width:10px;height:10px;border-radius:50%;border:1px solid #86c3cf"></div>
<div class="t" style="left:675.4px;top:273.5px;font-size:7.5px;color:#fff;transform-origin:0 0;transform:scaleX(0.987);-webkit-text-stroke:0.3px #fff;">ControlLogix16.Press-4.Tonnage</div>
<div class="t" style="left:927.9px;top:273.5px;font-size:7.5px;color:#fff;transform-origin:0 0;transform:scaleX(0.975);-webkit-text-stroke:0.3px #fff;">222.000 T</div>
<div style="left:642px;top:289.8px;width:325px;height:1px;background:#3d3b48"></div>
<div style="left:649.6px;top:298.0px;width:10px;height:10px;border-radius:50%;border:1px solid #86c3cf"></div>
<div class="t" style="left:675.4px;top:299.8px;font-size:7.5px;color:#fff;transform-origin:0 0;transform:scaleX(0.986);-webkit-text-stroke:0.3px #fff;">ControlLogix16.Press-4.CycleCount</div>
<div class="t" style="left:932.1px;top:299.8px;font-size:7.5px;color:#fff;transform-origin:0 0;transform:scaleX(0.947);-webkit-text-stroke:0.3px #fff;">15</div>
<div style="left:975.5px;top:98px;width:4.5px;height:453px;background:#393744"></div>
<div style="left:976px;top:139px;width:4px;height:345px;background:#98a1ab;border-radius:2px 0 0 2px"></div>
</div></body></html>
